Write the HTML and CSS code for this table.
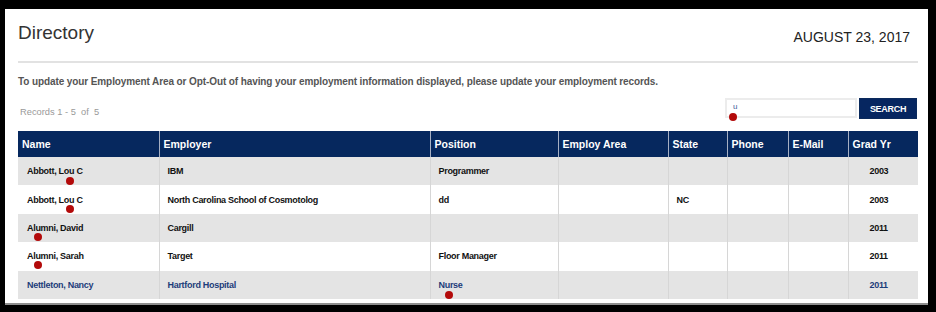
FILE: index.html
```html
<!DOCTYPE html>
<html lang="en">
<head>
<meta charset="utf-8">
<title>Directory</title>
<link rel="stylesheet" href="styles.css">
</head>
<body>
<div class="panel">
  <header class="head">
    <h1 class="title">Directory</h1>
    <div class="date">AUGUST 23, 2017</div>
  </header>
  <p class="intro">To update your Employment Area or Opt-Out of having your employment information displayed, please update your employment records.</p>
  <div class="toolbar">
    <div class="records">Records 1 - 5&nbsp; of&nbsp; 5</div>
    <form class="search">
      <div class="field">
        <input class="search-input" type="text" value="u">
        <span class="dot dot-field"></span>
      </div>
      <button class="search-btn" type="button">SEARCH</button>
    </form>
  </div>
  <table class="dir">
    <colgroup>
      <col class="c-name"><col class="c-emp"><col class="c-pos"><col class="c-area">
      <col class="c-state"><col class="c-phone"><col class="c-mail"><col class="c-yr">
    </colgroup>
    <thead>
      <tr><th>Name</th><th>Employer</th><th>Position</th><th>Employ Area</th><th>State</th><th>Phone</th><th>E-Mail</th><th>Grad Yr</th></tr>
    </thead>
    <tbody>
      <tr class="alt"><td>Abbott, Lou C<span class="dot dot-a"></span></td><td>IBM</td><td>Programmer</td><td></td><td></td><td></td><td></td><td class="yr">2003</td></tr>
      <tr><td>Abbott, Lou C<span class="dot dot-a"></span></td><td>North Carolina School of Cosmotolog</td><td>dd</td><td></td><td>NC</td><td></td><td></td><td class="yr">2003</td></tr>
      <tr class="alt"><td>Alumni, David<span class="dot dot-b"></span></td><td>Cargill</td><td></td><td></td><td></td><td></td><td></td><td class="yr">2011</td></tr>
      <tr><td>Alumni, Sarah<span class="dot dot-b"></span></td><td>Target</td><td>Floor Manager</td><td></td><td></td><td></td><td></td><td class="yr">2011</td></tr>
      <tr class="alt self"><td>Nettleton, Nancy</td><td>Hartford Hospital</td><td>Nurse<span class="dot dot-c"></span></td><td></td><td></td><td></td><td></td><td class="yr">2011</td></tr>
    </tbody>
  </table>
</div>
</body>
</html>
```
FILE: styles.css
```css
html, body {
  margin: 0;
  height: 100%;
}
body {
  background: #000;
  padding: 9px 8px 7px 5px;
  box-sizing: border-box;
  font-family: "Liberation Sans", Arial, sans-serif;
}
.panel {
  background: #fff;
  height: 296px;
  box-sizing: border-box;
  padding: 13px 10px 0 13px;
  border-bottom: 2px solid #8e8e8e;
}
.head {
  display: flex;
  justify-content: space-between;
  align-items: flex-start;
  height: 39px;
  border-bottom: 2px solid #e2e2e2;
}
.title {
  margin: 0;
  font-size: 19px;
  line-height: 22px;
  font-weight: normal;
  color: #333;
}
.date {
  margin-top: 7px;
  padding-right: 8px;
  font-size: 14px;
  line-height: 17px;
  color: #222;
}
.intro {
  margin: 12px 0 0;
  font-size: 10px;
  letter-spacing: -0.1px;
  line-height: 13px;
  font-weight: bold;
  color: #555;
}
.toolbar {
  display: flex;
  justify-content: space-between;
  align-items: flex-end;
  margin-top: 10px;
}
.records {
  margin: 0 0 0 2px;
  padding-bottom: 1px;
  font-size: 9.3px;
  line-height: 12px;
  color: #999;
}
.search {
  display: flex;
  align-items: flex-start;
  gap: 2px;
  margin: 0 1px 0 0;
}
.field {
  position: relative;
}
.search-input {
  display: block;
  box-sizing: border-box;
  width: 132px;
  height: 20px;
  margin: 0;
  padding: 0 0 3px 6px;
  border: 2px solid #ececec;
  font-family: inherit;
  font-size: 8px;
  color: #3e5c9a;
  outline: none;
}
.search-btn {
  display: block;
  box-sizing: border-box;
  width: 58px;
  height: 21px;
  margin: 0;
  padding: 0;
  border: 1px solid #0b2a5c;
  background: #062660;
  color: #fff;
  font-family: inherit;
  font-size: 9px;
  font-weight: bold;
  letter-spacing: -0.3px;
}
.dir {
  width: 900px;
  margin-top: 12px;
  border-collapse: collapse;
  table-layout: fixed;
}
.c-name { width: 141px; }
.c-emp { width: 271px; }
.c-pos { width: 128px; }
.c-area { width: 110px; }
.c-state { width: 59px; }
.c-phone { width: 61px; }
.c-mail { width: 60px; }
.c-yr { width: 70px; }
.dir th {
  height: 26px;
  padding: 0 0 0 4px;
  background: #06285e;
  color: #fff;
  font-size: 10.5px;
  font-weight: bold;
  text-align: left;
  border-left: 1px solid #a6b0c4;
}
.dir td {
  position: relative;
  height: 28.4px;
  padding: 0 0 0 8px;
  font-size: 9px;
  letter-spacing: -0.3px;
  font-weight: bold;
  color: #111;
  border-left: 1px solid #d6d6d6;
  white-space: nowrap;
}
.dir th:first-child,
.dir td:first-child {
  border-left: none;
}
.dir td:first-child {
  padding-left: 9px;
}
.dir td.yr {
  padding-left: 21px;
}
.dir tr.alt td {
  background: #e4e4e4;
}
.dir tr.self td {
  color: #1d3c7a;
}
.dot {
  position: absolute;
  width: 8px;
  height: 8px;
  border-radius: 50%;
  background: #b30a0a;
}
.dot-field { left: 4px; top: 15px; }
.dot-a { left: 48px; top: 20px; }
.dot-b { left: 16px; top: 19px; }
.dot-c { left: 14px; top: 20px; }
```
